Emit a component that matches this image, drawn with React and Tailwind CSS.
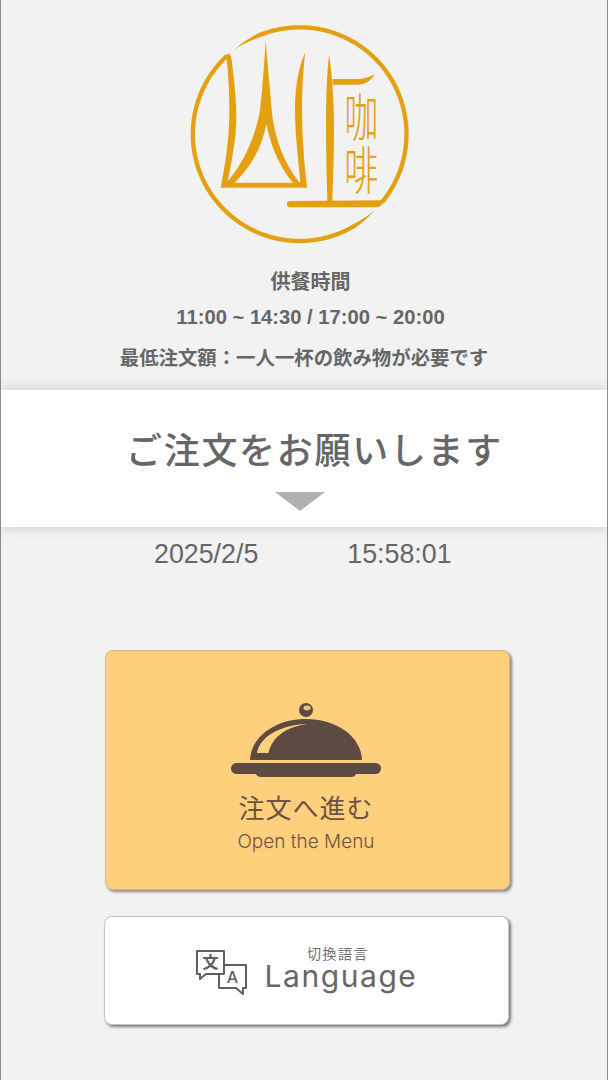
const C = "#e4a00f";
const CX = 389, CY = 372.5, R = 320.5, T = 6.5;

function arc(a0, a1, tapA, tapB) {
  const out = [], inn = [];
  const n = 160;
  for (let i = 0; i <= n; i++) {
    const a = a0 + ((a1 - a0) * i) / n;
    let k = 1;
    if (tapA && a - a0 < tapA) k = (a - a0) / tapA;
    if (tapB && a1 - a < tapB) k = (a1 - a) / tapB;
    const rad = (a * Math.PI) / 180;
    const c = Math.cos(rad), s = Math.sin(rad);
    out.push(`${(CX + (R + T * k) * c).toFixed(1)} ${(CY + (R + T * k) * s).toFixed(1)}`);
    inn.unshift(`${(CX + (R - T * k) * c).toFixed(1)} ${(CY + (R - T * k) * s).toFixed(1)}`);
  }
  return "M" + out.concat(inn).join(" L") + " Z";
}

function Logo() {
  return (
    <svg viewBox="0 0 780 750" className="block w-[260px] h-[250px]" fill={C}>
      <path d={arc(-128, 39.5, 16, 0)} />
      <path d={arc(45.5, 227, 14, 0)} />
      <path d="M168 134 C 176 128 183 132 185 150 C 192 205 199 265 199 320 C 199 395 182 465 172 522 L 152 533 C 165 465 178 390 178 310 C 178 250 176 190 168 134 Z" />
      <path d="M158 518 L 408 518 L 411 533 L 153 533 Z" />
      <path d="M287 90 C 292 160 301 240 305 300 C 312 385 345 465 392 522 L 372 522 C 335 480 305 420 289 342 C 275 420 235 480 190 522 L 164 524 C 215 470 256 385 270 300 C 277 240 283 160 287 90 Z" />
      <path d="M406 126 C 400 170 396 240 396 295 C 396 380 403 460 411 532 L 391 522 C 386 450 375 380 375 295 C 375 225 388 165 406 126 Z" />
      <path d="M477 135 C 485 180 492 265 492 345 C 492 430 489 510 487 576 L 472 576 C 470 500 468 420 468 335 C 468 260 471 190 477 135 Z" />
      <path d="M488 207 L 560 207 C 585 207 600 200 614 192 C 606 208 590 224 563 224 L 488 224 Z" />
      <path d="M360 573 L 644 571 C 638 582 632 590 622 592 L 360 592 C 347 592 347 573 360 573 Z" />
      <text
        transform="translate(574 243) scale(1.02 1.58)"
        style={{ writingMode: "vertical-rl" }}
        fontFamily="'Noto Sans CJK JP',sans-serif"
        fontWeight="300"
        fontSize="100"
      >
        咖啡
      </text>
    </svg>
  );
}

function Cloche() {
  return (
    <svg viewBox="0 0 150 74" className="block w-[150px] h-[74px]" fill="#5d4a41">
      <circle cx="75" cy="7" r="7" />
      <ellipse cx="76" cy="5" rx="3.6" ry="2.4" fill="#e9c08a" />
      <path d="M19 57 C 20 33 45 16 75 16 C 105 16 130 33 131 57 Z" />
      <path d="M26 50 C 29 33 50 22 76 21 C 55 24 41 34 37.5 50 Z" fill="#ffcf7d" />
      <rect x="0" y="60" width="150" height="11" rx="5.5" />
      <path d="M25 71 H125 C 124 73 123 74 120 74 H30 C 27 74 26 73 25 71 Z" />
    </svg>
  );
}

function Translate() {
  return (
    <svg viewBox="0 0 52 46" className="block w-[52px] h-[46px]" fill="none" stroke="#5f5f5f" strokeWidth="2">
      <path d="M1 1 H28 V24 H10 L4 29 V24 H1 Z" strokeLinejoin="round" />
      <path d="M28 15 H50 V38 H47 V44 L40 38 H23 V24" strokeLinejoin="round" />
      <text x="14.5" y="18" textAnchor="middle" fontSize="16" fontWeight="700" fill="#5f5f5f" stroke="none" fontFamily="'Noto Sans CJK JP',sans-serif">文</text>
      <text x="36.5" y="33" textAnchor="middle" fontSize="16" fontWeight="500" fill="#5f5f5f" stroke="none" fontFamily="Inter,sans-serif">A</text>
    </svg>
  );
}

export default function App() {
  return (
    <div className="w-[608px] h-[1080px] overflow-hidden bg-[#f2f2f2] border-x border-[#8a8a8a] text-[#666] font-['Liberation_Sans','Noto_Sans_CJK_JP',sans-serif]">
      <div className="flex flex-col items-center pt-[10px]">
        <div className="self-start ml-[169px]"><Logo /></div>
        <div className="mt-[5px] flex flex-col items-center font-bold text-[20px] text-[#666]">
          <p className="pl-[13px] leading-[35px]">供餐時間</p>
          <p className="pl-[13px] leading-[35px] text-[20.2px]">11:00 ~ 14:30 / 17:00 ~ 20:00</p>
          <p className="mt-[5px] leading-[36px] text-[19.4px]">最低注文額：一人一杯の飲み物が必要です</p>
        </div>
      </div>
      <div className="mt-[14px] h-[137px] bg-white shadow-[0_0_12px_rgba(0,0,0,0.18)] flex flex-col items-center">
        <h1 className="mt-[40px] self-start ml-[125px] text-[36px] leading-[44px] tracking-[1.7px] font-medium text-[#666]">ご注文をお願いします</h1>
        <div className="mt-[18px] mr-[9px] w-0 h-0 border-x-[25px] border-x-transparent border-t-[19px] border-t-[#b0b0b0]" />
      </div>
      <div className="flex justify-start gap-[89px] ml-[153px] mt-[11px] text-[26.8px] leading-[32px] text-[#666]">
        <span>2025/2/5</span>
        <span>15:58:01</span>
      </div>
      <div className="flex flex-col items-start pl-[103px] font-['Inter','Noto_Sans_CJK_JP',sans-serif]">
        <button className="mt-[80px] ml-[1px] w-[405px] h-[240px] pr-[3px] rounded-[8px] bg-[#ffcf7d] border border-[#d9b97f] shadow-[2px_2px_3px_rgba(0,0,0,0.45)] flex flex-col items-center text-[#6b5344]">
          <div className="mt-[52px]"><Cloche /></div>
          <span className="mt-[13px] text-[26px] leading-[38px] tracking-[1px]">注文へ進む</span>
          <span className="text-[19px] leading-[27px] font-light">Open the Menu</span>
        </button>
        <button className="mt-[26px] w-[405px] h-[109px] rounded-[8px] bg-white border border-[#c4c4c4] shadow-[2px_2px_3px_rgba(0,0,0,0.5)] flex items-center justify-center gap-[17px] text-[#666]">
          <div className="mt-[5px]"><Translate /></div>
          <span className="flex flex-col items-center pb-[3px]">
            <span className="mr-[6px] text-[14px] leading-[14px] tracking-[1.5px] text-[#707070]">切換語言</span>
            <span className="text-[30px] leading-[30px] tracking-[1.55px]">Language</span>
          </span>
        </button>
      </div>
    </div>
  );
}
